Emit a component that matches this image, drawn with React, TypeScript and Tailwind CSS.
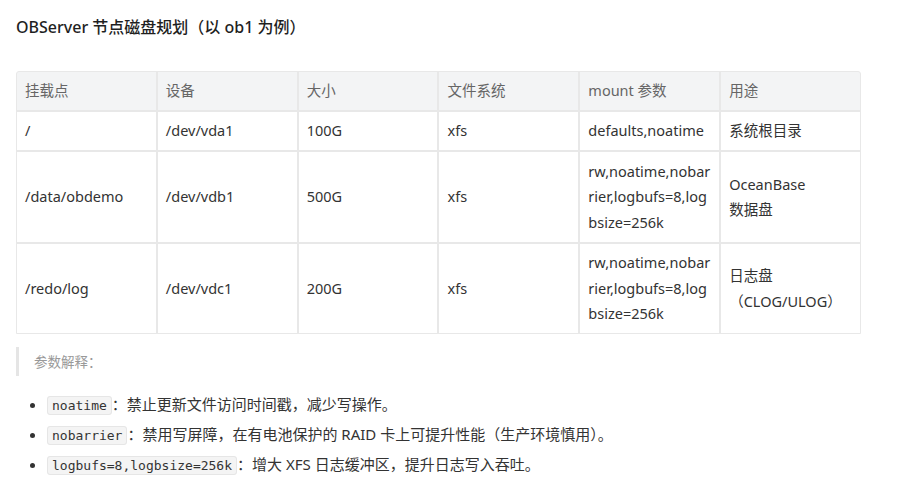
import React from "react";

type Row = {
  mount: string;
  device: string;
  size: string;
  fs: string;
  opts: string;
  usage: React.ReactNode;
};

const headers = ["挂载点", "设备", "大小", "文件系统", "mount 参数", "用途"];

const rows: Row[] = [
  { mount: "/", device: "/dev/vda1", size: "100G", fs: "xfs", opts: "defaults,noatime", usage: "系统根目录" },
  {
    mount: "/data/obdemo",
    device: "/dev/vdb1",
    size: "500G",
    fs: "xfs",
    opts: "rw,noatime,nobarrier,logbufs=8,logbsize=256k",
    usage: (
      <>
        OceanBase
        <br />
        数据盘
      </>
    ),
  },
  {
    mount: "/redo/log",
    device: "/dev/vdc1",
    size: "200G",
    fs: "xfs",
    opts: "rw,noatime,nobarrier,logbufs=8,logbsize=256k",
    usage: "日志盘（CLOG/ULOG）",
  },
];

const notes = [
  { code: "noatime", text: "禁止更新文件访问时间戳，减少写操作。" },
  { code: "nobarrier", text: "禁用写屏障，在有电池保护的 RAID 卡上可提升性能（生产环境慎用）。" },
  { code: "logbufs=8,logbsize=256k", text: "增大 XFS 日志缓冲区，提升日志写入吞吐。" },
];

const Cell = ({ children, head, wrapAll }: { children: React.ReactNode; head?: boolean; wrapAll?: boolean }) => (
  <div
    className={
      head
        ? "flex items-center bg-[#f3f4f5] pl-2 pr-1 text-[#666666]"
        : wrapAll
          ? "flex items-center bg-white pl-2 pr-1 py-[7px] leading-[25.5px] text-[#333333] break-all"
          : "flex items-center bg-white pl-2 pr-1 py-[7px] leading-[25.5px] text-[#333333]"
    }
  >
    <div>{children}</div>
  </div>
);

export default function App() {
  return (
    <div
      className="h-[494px] w-full bg-white px-4 text-[14.5px]"
      style={{ fontFamily: '"Noto Sans", "Noto Sans CJK SC", sans-serif' }}
    >
      <h2 className="pt-[17px] text-[16px] font-medium leading-[20px] text-[#1f1f1f]">
        OBServer 节点磁盘规划（以 ob1 为例）
      </h2>

      <div className="mt-[34px] grid w-[845px] grid-cols-6 grid-rows-[38px_38px_90px_89px] gap-[2px] overflow-hidden rounded-t-[3px] border border-[#e8e8e8] bg-[#e8e8e8]">
        {headers.map((h) => (
          <Cell key={h} head>
            {h}
          </Cell>
        ))}
        {rows.map((r) => (
          <React.Fragment key={r.mount}>
            <Cell>{r.mount}</Cell>
            <Cell>{r.device}</Cell>
            <Cell>{r.size}</Cell>
            <Cell>{r.fs}</Cell>
            <Cell wrapAll>{r.opts}</Cell>
            <Cell>{r.usage}</Cell>
          </React.Fragment>
        ))}
      </div>

      <blockquote
        className="mt-[13px] border-l-[3px] border-[#e5e5e5] pl-[15px] text-[13.5px] leading-[29px] text-[#999999]"
        style={{ fontFamily: '"Noto Sans CJK SC", sans-serif' }}
      >
        参数解释：
      </blockquote>

      <ul className="mt-[13px] list-disc pl-[31px] text-[15px] text-[#333333]">
        {notes.map((n) => (
          <li key={n.code} className="h-[30px] leading-[30px]">
            <code
              className="rounded-[3px] border border-[#e6e6e6] bg-[#f4f4f4] px-[4px] py-[1px] text-[13px] leading-none text-[#333333]"
              style={{ fontFamily: '"DejaVu Sans Mono", monospace' }}
            >
              {n.code}
            </code>
            ：{n.text}
          </li>
        ))}
      </ul>
    </div>
  );
}
